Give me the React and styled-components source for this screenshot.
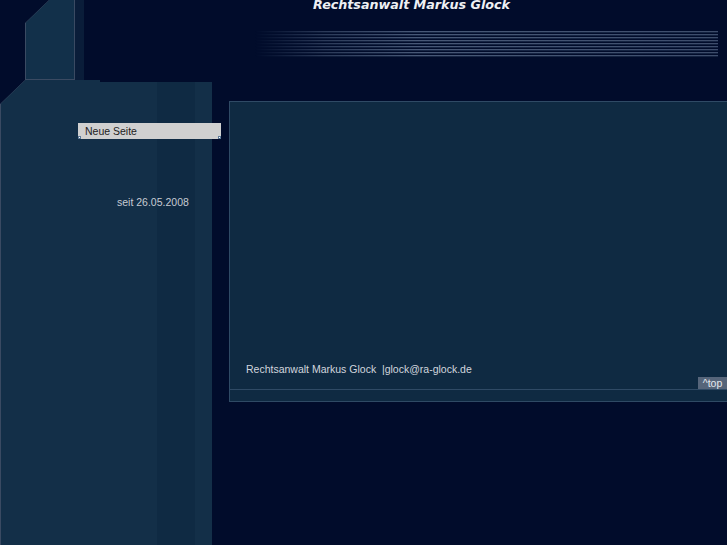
import React from "react";
import styled, { createGlobalStyle } from "styled-components";

const Global = createGlobalStyle`
  html, body { margin: 0; padding: 0; background: #010c2b; }
  body { font-family: "Liberation Sans", Arial, sans-serif; overflow: hidden; }
`;

const Page = styled.div`
  min-height: 545px;
  height: 100vh;
  display: flex;
  flex-direction: column;
  background: #010c2b;
`;

const Header = styled.header`
  display: flex;
  height: 80px;
  flex: none;
`;

const TabOuter = styled.div`
  margin-left: 25px;
  width: 50px;
  height: 80px;
  box-sizing: border-box;
  padding: 0 1px 1px 1px;
  background: #3a4a62;
  clip-path: polygon(24px 0, 100% 0, 100% 100%, 0 100%, 0 23px);
`;

const TabInner = styled.div`
  height: 100%;
  background: #12304a;
  clip-path: polygon(23.4px 0, 100% 0, 100% 100%, 0 100%, 0 22.4px);
`;

const Strip = styled.div`
  width: 9px;
  height: 80px;
  background: #0a1d39;
`;

const HeaderContent = styled.div`
  flex: 1;
  display: flex;
  flex-direction: column;
`;

const Title = styled.h1`
  margin: -2px 0 0 229px;
  font-family: "DejaVu Sans", Verdana, sans-serif;
  font-weight: bold;
  font-style: italic;
  font-size: 12.7px;
  line-height: 13px;
  color: #eef0f4;
  white-space: nowrap;
`;

const Lines = styled.div`
  margin: 20px 0 0 171px;
  width: 463px;
  height: 26px;
  background: repeating-linear-gradient(
    to bottom,
    rgba(120, 140, 170, 0.6) 0 1px,
    rgba(50, 70, 100, 0.45) 1px 2px,
    transparent 2px 3px
  );
  -webkit-mask-image: linear-gradient(to right, transparent 0, rgba(0,0,0,0.6) 15%, #000 35%, rgba(0,0,0,0.85) 100%);
  mask-image: linear-gradient(to right, transparent 0, rgba(0,0,0,0.6) 15%, #000 35%, rgba(0,0,0,0.85) 100%);
`;

const Body = styled.div`
  flex: 1;
  display: flex;
  align-items: flex-start;
`;

const Sidebar = styled.aside`
  position: relative;
  width: 212px;
  align-self: stretch;
  box-sizing: border-box;
  padding-top: 43px;

  &::before,
  &::after {
    content: "";
    position: absolute;
    inset: 0;
    clip-path: polygon(25px 0, 100px 0, 100px 2px, 100% 2px, 100% 100%, 0 100%, 0 24px);
  }
  &::before {
    background: #3a4a62;
  }
  &::after {
    left: 1px;
    background: linear-gradient(
      to right,
      #132f48 0 156px,
      #0f2a43 156px 194px,
      #132f48 194px 100%
    );
    clip-path: polygon(24.4px 0, 99px 0, 99px 2px, 100% 2px, 100% 100%, 0 100%, 0 23.6px);
  }
`;

const Nav = styled.nav`
  position: relative;
  z-index: 2;
  margin-left: 78px;
  width: 143px;
`;

const NavItem = styled.a`
  position: relative;
  display: block;
  height: 16px;
  box-sizing: border-box;
  padding-left: 7px;
  background: #d0d0d0;
  color: #222;
  font-size: 10.5px;
  line-height: 16px;
  text-decoration: none;
`;

const Corner = styled.span`
  position: absolute;
  bottom: 0;
  ${(p) => (p.$right ? "right: 0;" : "left: 0;")}
  width: 1px;
  height: 1px;
  border: 1px solid #5d7a99;
  background: #fff;
`;

const Since = styled.div`
  position: relative;
  z-index: 2;
  margin: 57px 0 0 117px;
  color: #c6cbd3;
  font-size: 10.5px;
  line-height: 12px;
`;

const Main = styled.main`
  margin: 21px 0 0 17px;
  flex: 1;
  height: 301px;
  box-sizing: border-box;
  border: 1px solid #2f4a65;
  border-right: none;
  background: #0f2a42;
  display: flex;
  flex-direction: column;
`;

const Content = styled.div`
  flex: 1;
  position: relative;
  display: flex;
  align-items: flex-end;
  padding: 0 0 14px 16px;
  border-bottom: 1px solid #2f4a65;
`;

const FooterText = styled.p`
  margin: 0;
  color: #d2d6de;
  font-size: 10.5px;
  line-height: 12px;
  white-space: pre;
`;

const TopLink = styled.a`
  position: absolute;
  right: 0;
  bottom: 0;
  width: 29px;
  height: 12px;
  background: #56657a;
  color: #e4e8ee;
  font-size: 10.5px;
  line-height: 12px;
  text-align: center;
  text-decoration: none;
`;

const BottomBar = styled.div`
  height: 11px;
`;

export default function App() {
  return (
    <Page>
      <Global />
      <Header>
        <TabOuter>
          <TabInner />
        </TabOuter>
        <Strip />
        <HeaderContent>
          <Title>Rechtsanwalt Markus Glock</Title>
          <Lines />
        </HeaderContent>
      </Header>
      <Body>
        <Sidebar>
          <Nav>
            <NavItem href="#">
              Neue Seite
              <Corner />
              <Corner $right />
            </NavItem>
          </Nav>
          <Since>seit 26.05.2008</Since>
        </Sidebar>
        <Main>
          <Content>
            <FooterText>Rechtsanwalt Markus Glock  |glock@ra-glock.de</FooterText>
            <TopLink href="#">^top</TopLink>
          </Content>
          <BottomBar />
        </Main>
      </Body>
    </Page>
  );
}
